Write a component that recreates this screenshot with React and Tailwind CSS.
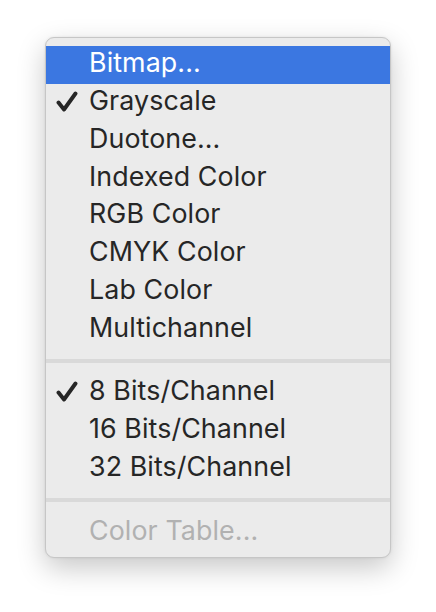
import React from 'react';

const groups = [
  [
    { label: 'Bitmap...', active: true },
    { label: 'Grayscale', checked: true },
    { label: 'Duotone...' },
    { label: 'Indexed Color' },
    { label: 'RGB Color' },
    { label: 'CMYK Color' },
    { label: 'Lab Color' },
    { label: 'Multichannel' },
  ],
  [
    { label: '8 Bits/Channel', checked: true },
    { label: '16 Bits/Channel' },
    { label: '32 Bits/Channel' },
  ],
  [{ label: 'Color Table...', disabled: true }],
];

const Check = ({ color }) => (
  <svg width="22" height="21" viewBox="0 0 22 21" fill="none">
    <path
      d="M2.5 11.5 L8 18.5 L19.5 2.5"
      stroke={color}
      strokeWidth="3.9"
      strokeLinecap="round"
      strokeLinejoin="round"
    />
  </svg>
);

const MenuItem = ({ item }) => {
  const text = item.active
    ? 'text-white'
    : item.disabled
    ? 'text-[#b1b1b1]'
    : 'text-[#262626]';
  return (
    <div
      className={`flex items-center h-[37.75px] ${item.active ? 'bg-[#3b77e1]' : ''}`}
    >
      <div className="w-[43px] pl-[10px] pb-[2px] flex items-center">
        {item.checked && <Check color={item.active ? '#ffffff' : '#262626'} />}
      </div>
      <span className={`text-[26.8px] tracking-[0.1px] leading-none pb-[4px] ${text}`}>{item.label}</span>
    </div>
  );
};

export default function App() {
  return (
    <div
      className="w-[436px] h-[612px] bg-white pl-[45px] pt-[37px]"
      style={{ fontFamily: 'Inter, "Liberation Sans", sans-serif' }}
    >
      <div className="w-[346px] rounded-[9px] border border-[#c6c6c6] bg-[#ebebeb] pt-[8px] pb-[6px] shadow-[0_10px_28px_rgba(0,0,0,0.22),0_0_3px_rgba(0,0,0,0.08)] overflow-hidden">
        {groups.map((g, gi) => (
          <div key={gi}>
            {gi > 0 && <div className="my-[11px] h-[4px] bg-[#d9d9d9]" />}
            {g.map((item) => (
              <MenuItem key={item.label} item={item} />
            ))}
          </div>
        ))}
      </div>
    </div>
  );
}
